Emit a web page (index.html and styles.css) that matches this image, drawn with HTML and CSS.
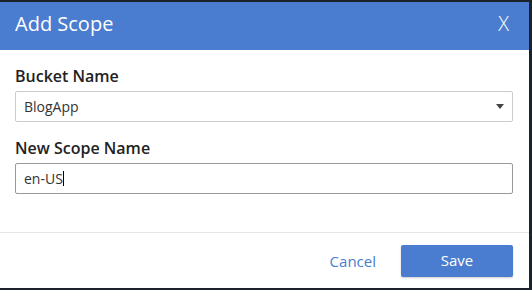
FILE: index.html
```html
<!DOCTYPE html>
<html>
<head>
<meta charset="utf-8">
<link rel="stylesheet" href="styles.css">
</head>
<body>
<div class="modal">
  <div class="modal-header">
    <span class="modal-title">Add Scope</span>
    <span class="modal-close">X</span>
  </div>
  <div class="modal-body">
    <div class="field">
      <label class="field-label">Bucket Name</label>
      <div class="select">
        <span class="select-value">BlogApp</span>
        <span class="select-caret"></span>
      </div>
    </div>
    <div class="field">
      <label class="field-label">New Scope Name</label>
      <div class="input"><span class="input-value">en-US</span><span class="cursor"></span></div>
    </div>
  </div>
  <div class="modal-footer">
    <span class="btn-link">Cancel</span>
    <span class="btn-primary">Save</span>
  </div>
</div>
</body>
</html>
```

FILE: styles.css
```css
html, body {
  margin: 0;
  padding: 0;
}
body {
  background: #1c212c;
  width: 532px;
  height: 290px;
  overflow: hidden;
  font-family: "Open Sans", "Noto Sans", sans-serif;
  padding-top: 2px;
  box-sizing: border-box;
}
.modal {
  width: 529px;
  height: 286px;
  background: #ffffff;
  display: flex;
  flex-direction: column;
}
.modal-header {
  height: 48px;
  background: #4a7ccf;
  display: flex;
  align-items: flex-start;
  justify-content: space-between;
  padding: 0 20px 0 15px;
  color: #ffffff;
  line-height: 44px;
}
.modal-title {
  font-size: 20px;
  font-weight: 400;
}
.modal-close {
  font-size: 20px;
  font-weight: 300;
}
.modal-body {
  padding: 15px 16px 38px 15px;
  border-bottom: 1px solid #e6e6e6;
  display: flex;
  flex-direction: column;
  gap: 15px;
}
.field {
  display: flex;
  flex-direction: column;
  gap: 4px;
}
.field-label {
  font-size: 16px;
  font-weight: 600;
  line-height: 22px;
  color: #222222;
}
.select, .input {
  height: 31px;
  box-sizing: border-box;
  border: 1px solid #cccccc;
  border-radius: 2px;
  display: flex;
  align-items: center;
  padding: 0 8px;
  font-size: 14px;
  color: #333333;
}
.input {
  border-color: #999999;
}
.select {
  justify-content: space-between;
}
.select-caret {
  width: 0;
  height: 0;
  border-left: 4px solid transparent;
  border-right: 4px solid transparent;
  border-top: 5px solid #444444;
  margin-right: 0;
}
.cursor {
  display: inline-block;
  width: 1px;
  height: 15px;
  background: #000000;
  margin-left: 0;
}
.modal-footer {
  flex: 1;
  display: flex;
  justify-content: flex-end;
  align-items: flex-start;
  padding: 12px 16px 0 0;
  gap: 25px;
}
.btn-link {
  color: #4a7ccf;
  font-size: 15px;
  line-height: 32px;
}
.btn-primary {
  width: 112px;
  height: 32px;
  line-height: 31px;
  text-align: center;
  background: #4a7ccf;
  color: #ffffff;
  font-size: 15px;
  border-radius: 2px;
  box-shadow: 0 1px 2px rgba(0, 0, 0, 0.2);
}
```
